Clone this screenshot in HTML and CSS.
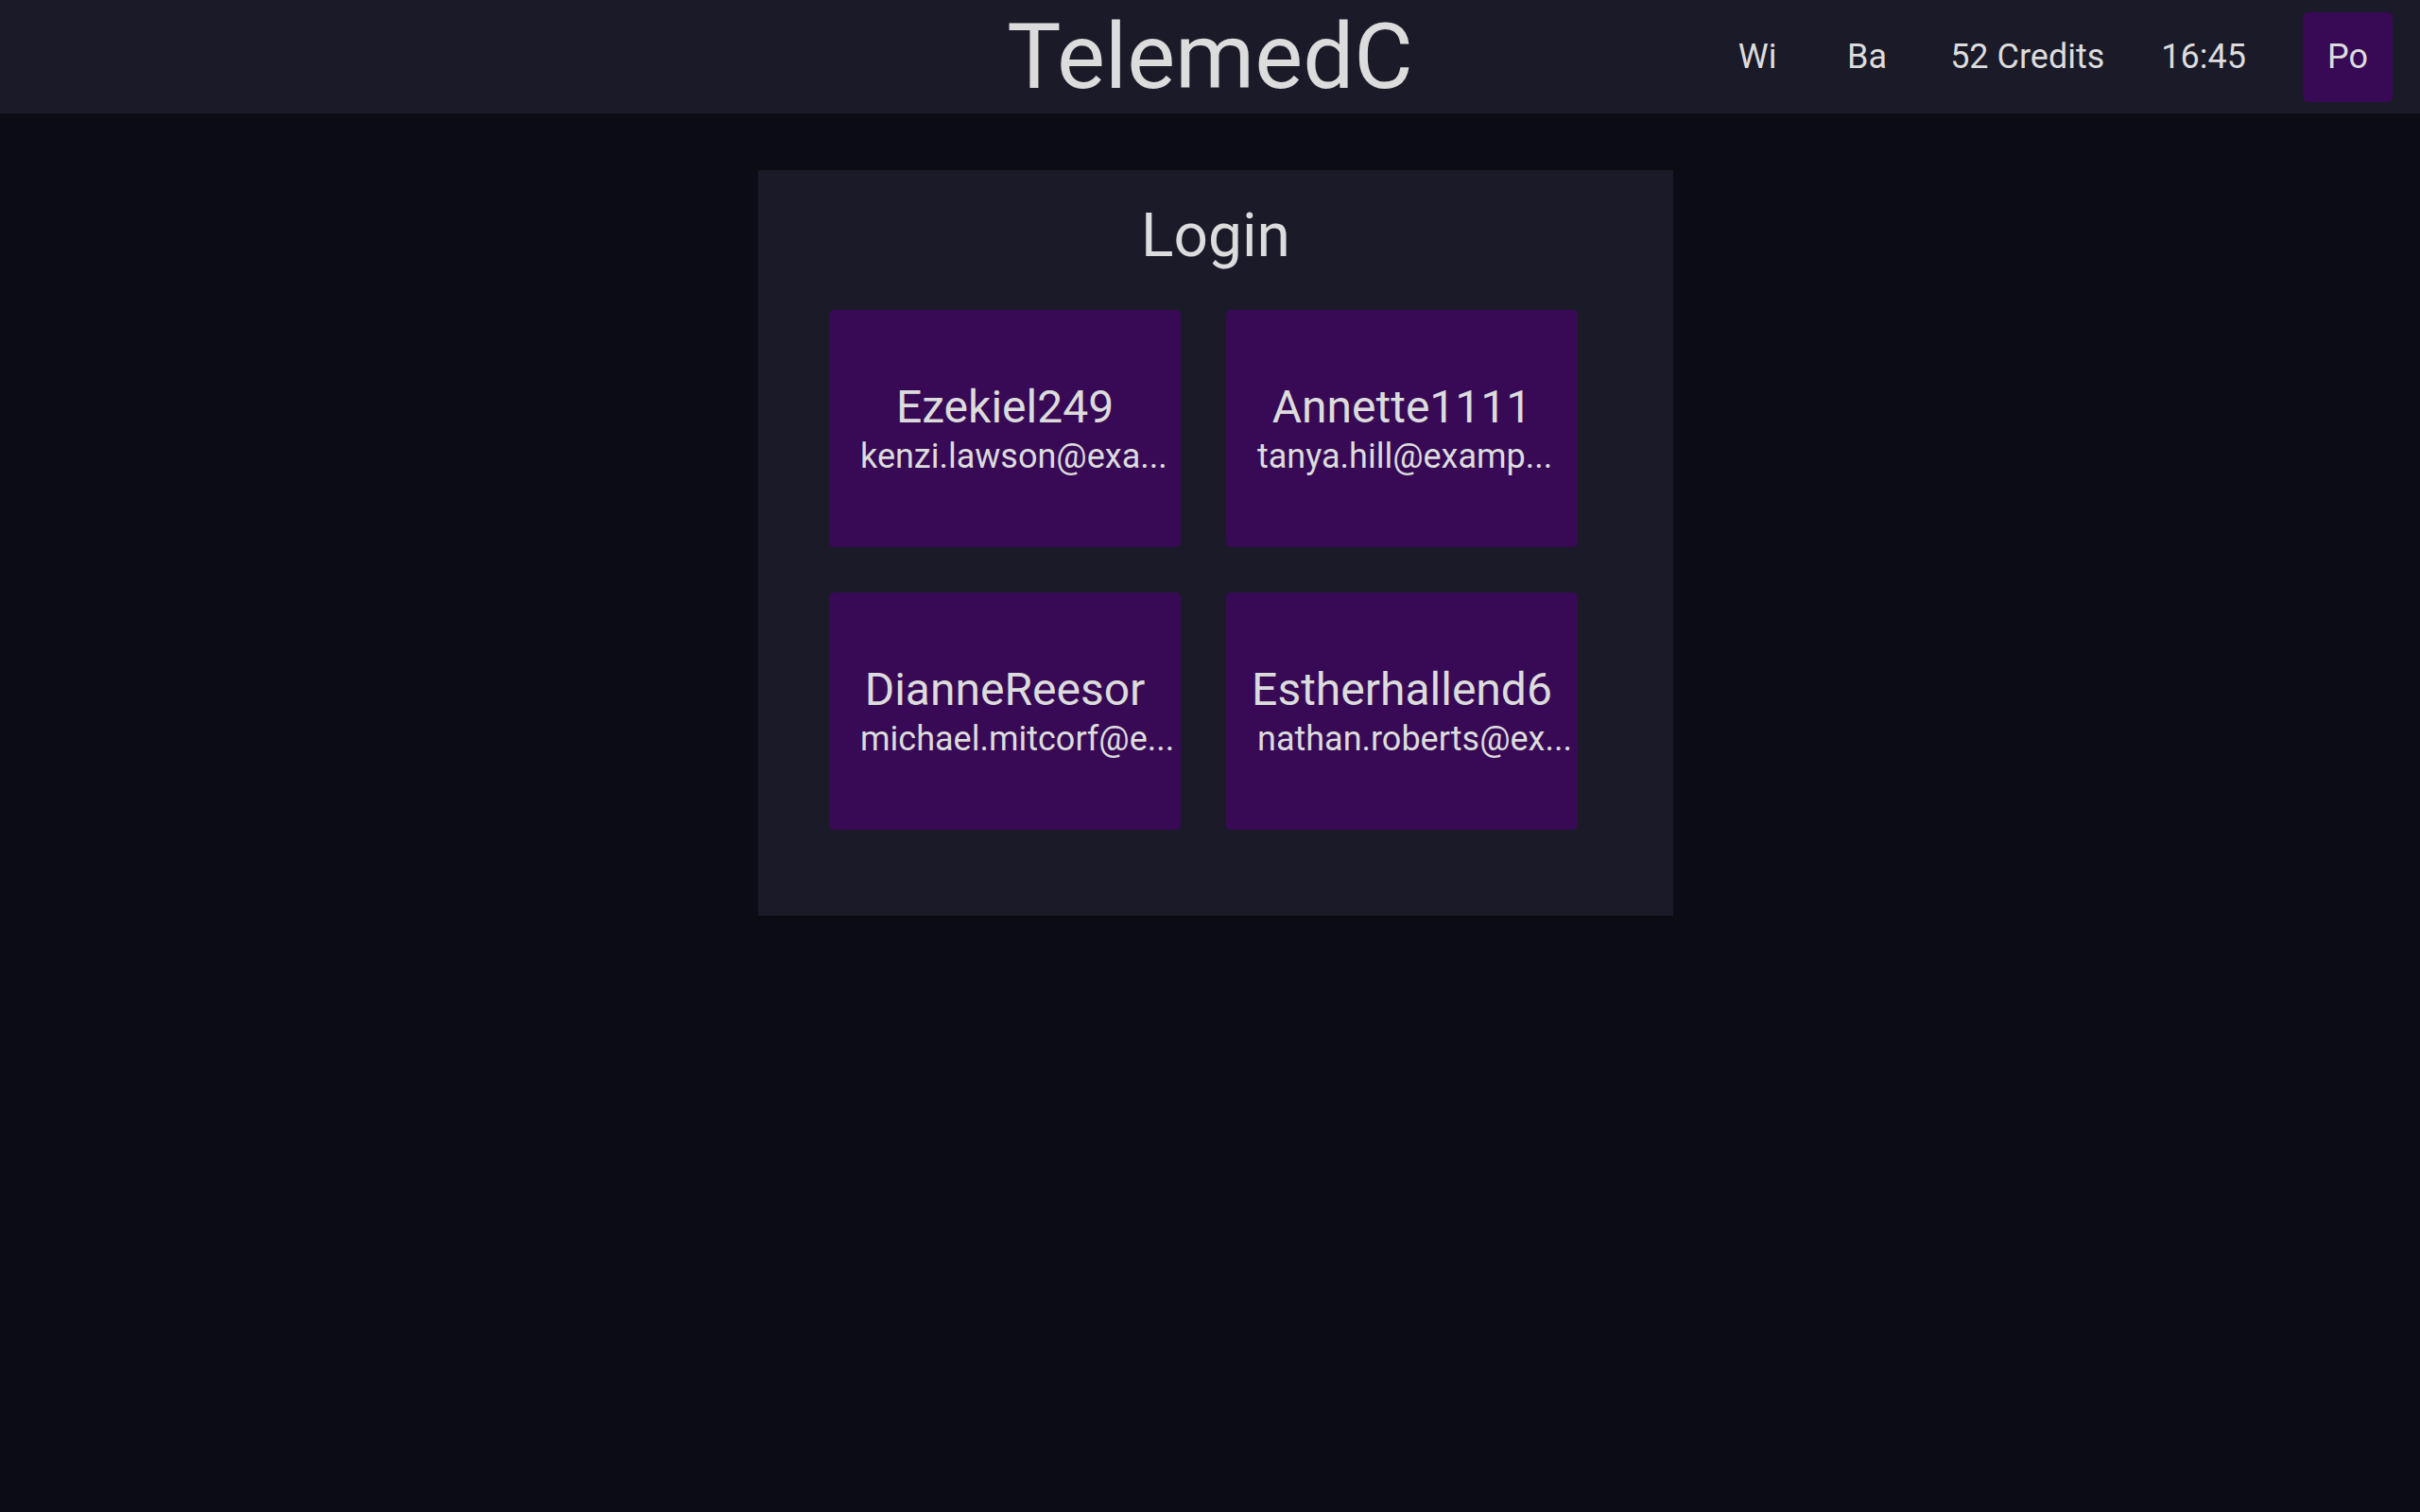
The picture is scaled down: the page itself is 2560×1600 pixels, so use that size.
FILE: index.html
```html
<!DOCTYPE html>
<html lang="en">
<head>
<meta charset="utf-8">
<title>TelemedC</title>
<link rel="stylesheet" href="styles.css">
</head>
<body>
<header class="topbar">
  <div class="spacer"></div>
  <h1 class="brand">TelemedC</h1>
  <nav class="status">
    <span class="status-item status-icon">Wi</span>
    <span class="status-item status-icon">Ba</span>
    <span class="status-item">52 Credits</span>
    <span class="status-item">16:45</span>
    <button class="power">Po</button>
  </nav>
</header>
<main class="main">
  <section class="login-card">
    <h2 class="login-title">Login</h2>
    <div class="user-grid">
      <div class="user-tile">
        <div class="user-name">Ezekiel249</div>
        <div class="user-email">kenzi.lawson@exa...</div>
      </div>
      <div class="user-tile">
        <div class="user-name">Annette1111</div>
        <div class="user-email">tanya.hill@examp...</div>
      </div>
      <div class="user-tile">
        <div class="user-name">DianneReesor</div>
        <div class="user-email">michael.mitcorf@e...</div>
      </div>
      <div class="user-tile">
        <div class="user-name">Estherhallend6</div>
        <div class="user-email">nathan.roberts@ex...</div>
      </div>
    </div>
  </section>
</main>
</body>
</html>
```

FILE: styles.css
```css
* {
  box-sizing: border-box;
}

html, body {
  margin: 0;
  padding: 0;
}

body {
  background: #0c0c14;
  color: #dcdcdc;
  font-family: Roboto, "Liberation Sans", sans-serif;
  min-height: 1600px;
}

.topbar {
  height: 120px;
  background: #1b1a29;
  display: grid;
  grid-template-columns: 1fr auto 1fr;
  align-items: center;
  padding: 0 29px;
}

.brand {
  margin: 0;
  font-size: 96px;
  font-weight: 400;
  line-height: 1.172;
  color: #dcdcdc;
}

.status {
  justify-self: end;
  display: flex;
  align-items: center;
  gap: 60px;
}

.status-item {
  font-size: 36px;
  color: #dcdcdc;
  white-space: nowrap;
}

.status-icon {
  width: 56px;
  text-align: center;
}

.power {
  height: 95px;
  padding: 0 26px;
  border: none;
  border-radius: 6px;
  background: #380a56;
  color: #dcdcdc;
  font-family: Roboto, "Liberation Sans", sans-serif;
  font-size: 36px;
}

.main {
  display: flex;
  flex-direction: column;
  align-items: center;
  padding: 60px 0 0 12px;
}

.login-card {
  width: 968px;
  background: #1b1a29;
  padding: 32px 75px 91px 75px;
}

.login-title {
  margin: 0 0 41px 0;
  text-align: center;
  font-size: 64px;
  font-weight: 400;
  line-height: 1.172;
}

.user-grid {
  display: grid;
  grid-template-columns: repeat(2, 372px);
  grid-auto-rows: 251px;
  gap: 48px;
}

.user-tile {
  background: #380a56;
  border-radius: 5px;
  padding: 0 16px;
  display: flex;
  flex-direction: column;
  justify-content: center;
  text-align: center;
}

.user-name {
  font-size: 48px;
  line-height: 1.172;
  white-space: nowrap;
}

.user-email {
  font-size: 36px;
  line-height: 1.172;
  white-space: nowrap;
  text-align: left;
  padding-left: 17px;
  margin-top: 2px;
}
```
